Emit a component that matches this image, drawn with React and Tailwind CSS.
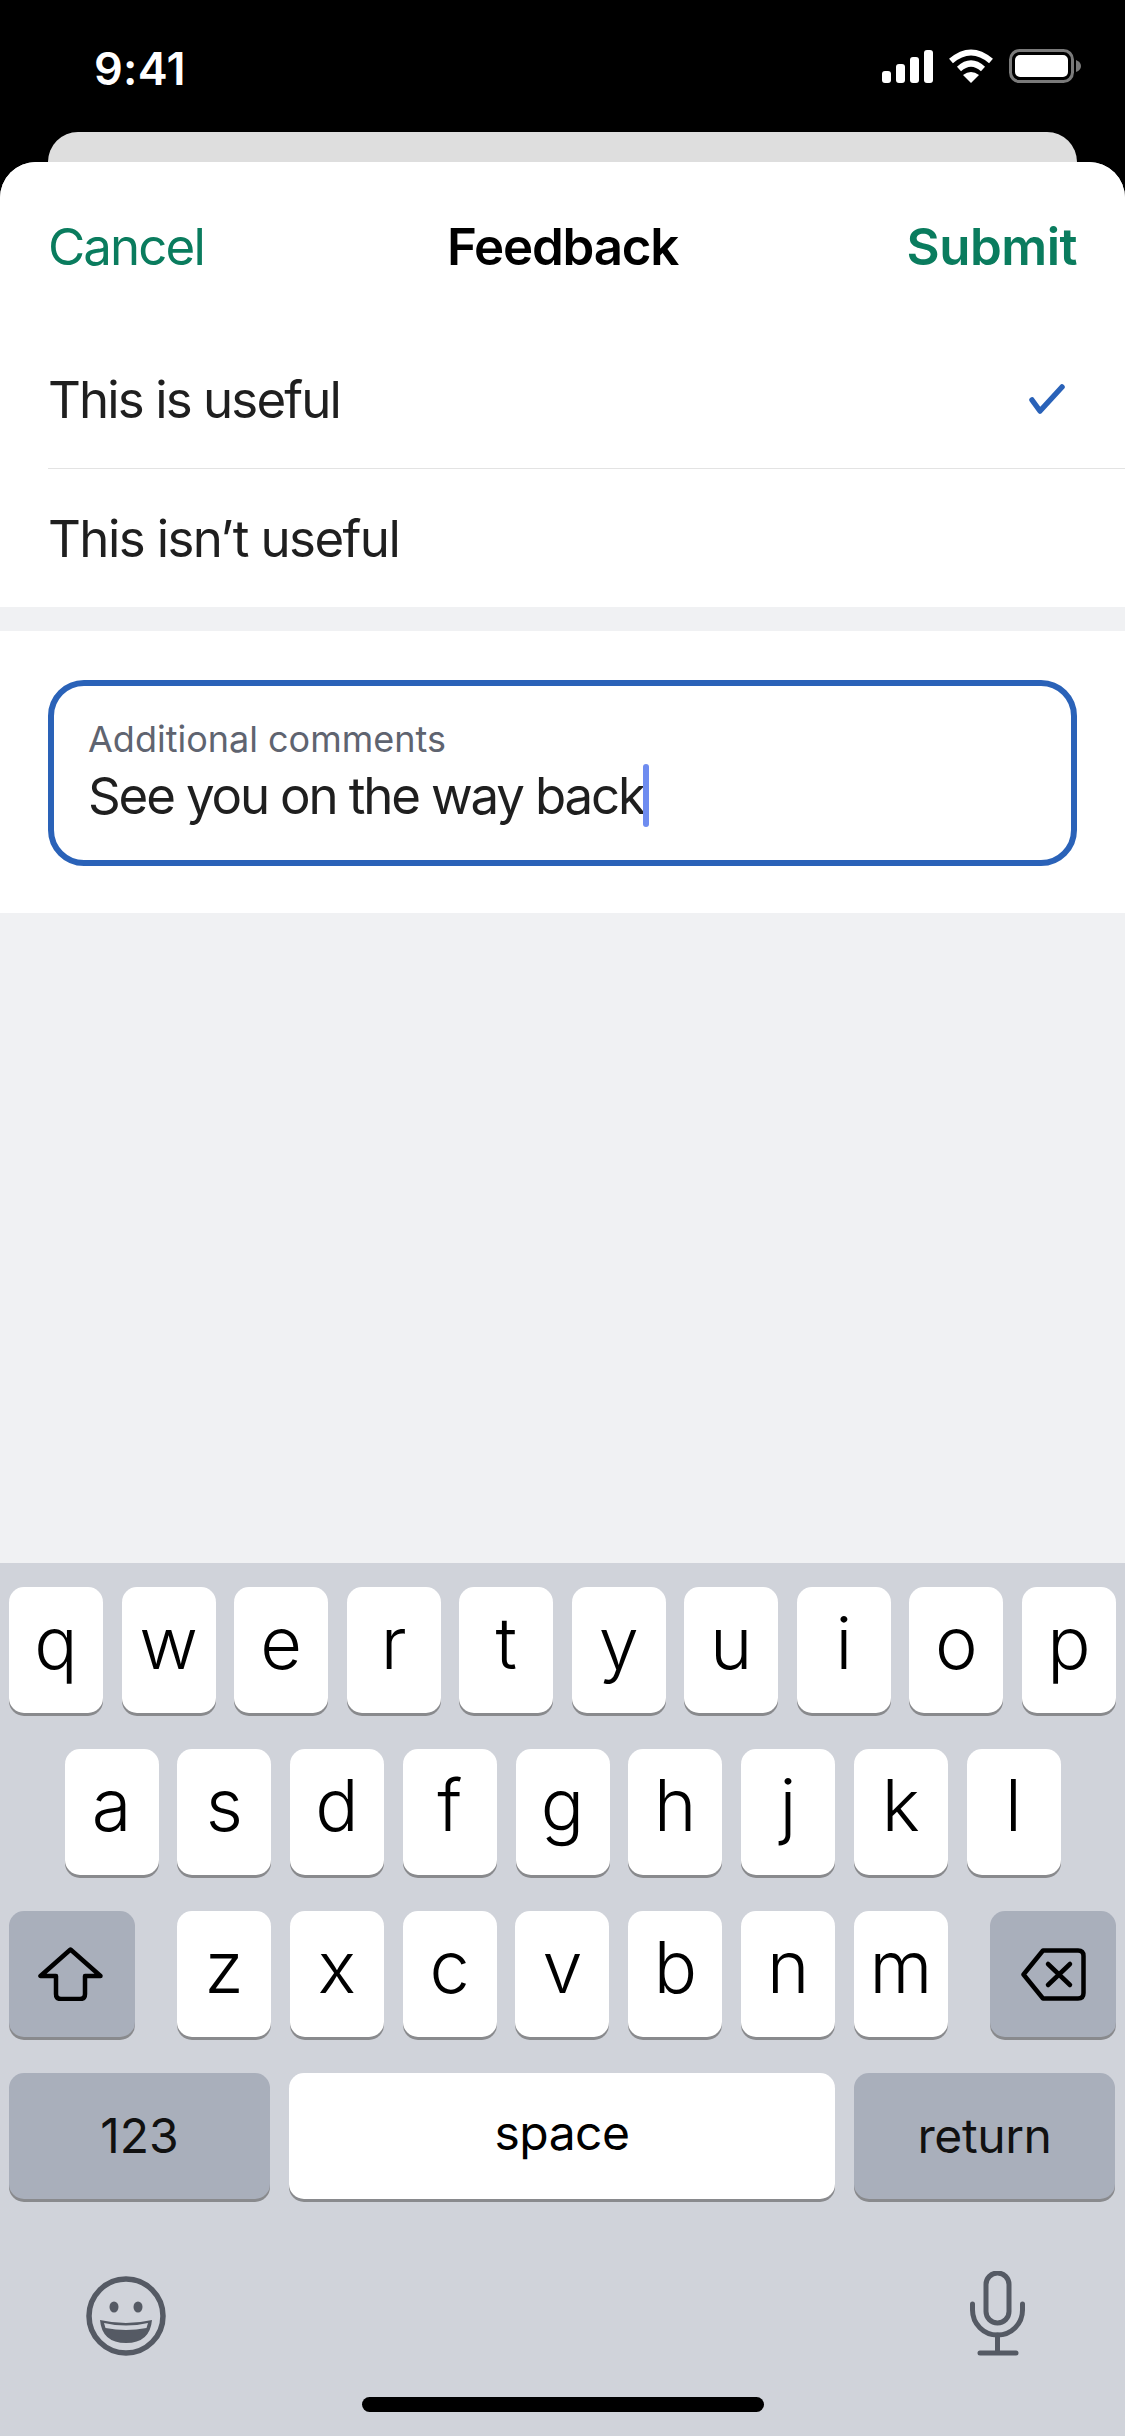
const ROW_1 = ['q', 'w', 'e', 'r', 't', 'y', 'u', 'i', 'o', 'p']
const ROW_2 = ['a', 's', 'd', 'f', 'g', 'h', 'j', 'k', 'l']
const ROW_3 = ['z', 'x', 'c', 'v', 'b', 'n', 'm']

function StatusIcons() {
  return (
    <div className="flex items-center mr-[43px]">
      <svg width="51" height="33" viewBox="0 0 51 33" className="mr-[15px]">
        <rect x="0" y="21" width="9" height="12" rx="3" fill="#fff" />
        <rect x="14" y="14" width="9" height="19" rx="3" fill="#fff" />
        <rect x="28" y="7" width="9" height="26" rx="3" fill="#fff" />
        <rect x="42" y="0" width="9" height="33" rx="3" fill="#fff" />
      </svg>
      <svg width="46" height="34" viewBox="0 0 46 34" className="mr-[15px]">
        <path d="M3 12 Q23 -5 43 12" fill="none" stroke="#fff" strokeWidth="6" />
        <path d="M11 20 Q23 9 35 20" fill="none" stroke="#fff" strokeWidth="6" />
        <path d="M15 26 Q23 20 31 26 L23 34 Z" fill="#fff" />
      </svg>
      <svg width="73" height="34" viewBox="0 0 73 34">
        <rect x="1.5" y="1.5" width="62" height="31" rx="9" fill="none" stroke="#7a7a7a" strokeWidth="3" />
        <rect x="6" y="6" width="53" height="22" rx="5" fill="#fff" />
        <path d="M67 11 Q72 13 72 17 Q72 21 67 23 Z" fill="#7a7a7a" />
      </svg>
    </div>
  )
}

function Check() {
  return (
    <svg width="36" height="30" viewBox="0 0 36 30">
      <path d="M3 16 L11 27 L33 3" fill="none" stroke="#2a62b8" strokeWidth="5.5" strokeLinecap="round" strokeLinejoin="round" />
    </svg>
  )
}

function ShiftIcon() {
  return (
    <svg width="65" height="54" viewBox="0 0 65 54" className="mr-[3px]">
      <path
        d="M32.5 2.5 L2.5 29 H18 V47 Q18 52 23 52 H42 Q47 52 47 47 V29 H62.5 Z"
        fill="none"
        stroke="#000"
        strokeWidth="4.5"
        strokeLinejoin="round"
      />
    </svg>
  )
}

function DeleteIcon() {
  return (
    <svg width="65" height="53" viewBox="0 0 65 53">
      <path
        d="M22 2.5 H57 Q62.5 2.5 62.5 8 V45 Q62.5 50.5 57 50.5 H22 L2.5 26.5 Z"
        fill="none"
        stroke="#000"
        strokeWidth="4.5"
        strokeLinejoin="round"
      />
      <path d="M27 16 L49 37 M49 16 L27 37" fill="none" stroke="#000" strokeWidth="4.5" strokeLinecap="round" />
    </svg>
  )
}

function EmojiIcon() {
  return (
    <svg width="80" height="80" viewBox="0 0 80 80">
      <ellipse cx="40" cy="40" rx="37" ry="37" fill="none" stroke="#555a64" strokeWidth="5.5" />
      <ellipse cx="28" cy="31" rx="4.5" ry="5.5" fill="#555a64" />
      <ellipse cx="52" cy="31" rx="4.5" ry="5.5" fill="#555a64" />
      <path d="M14 44 Q40 50 66 44 Q64 67 40 67 Q16 67 14 44 Z" fill="#555a64" />
      <path d="M18 47 Q40 52 62 47 L60.5 52 Q40 56 19.5 52 Z" fill="#d0d3da" />
    </svg>
  )
}

function MicIcon() {
  return (
    <svg width="55" height="85" viewBox="0 0 55 85">
      <rect x="16" y="2" width="23" height="50" rx="11.5" fill="none" stroke="#555a64" strokeWidth="5" />
      <path d="M2.5 33 V39 A25 25 0 0 0 52.5 39 V33" fill="none" stroke="#555a64" strokeWidth="5" strokeLinecap="round" />
      <path d="M27.5 64 V81 M10 82 H46" fill="none" stroke="#555a64" strokeWidth="5" strokeLinecap="round" />
    </svg>
  )
}

function Key({ label }) {
  return (
    <div className="w-[94px] h-[126px] rounded-[15px] bg-white shadow-[0_3px_0_#898a8d] flex items-center justify-center text-[72px] leading-none font-light text-black pb-[14px]">
      {label}
    </div>
  )
}

function WideKey({ label, tracking }) {
  return (
    <div className={`w-[261px] h-[126px] rounded-[15px] bg-[#a9afbb] shadow-[0_3px_0_#898a8d] flex items-center justify-center text-[48px] leading-none text-[#111] ${tracking}`}>
      {label}
    </div>
  )
}

export default function App() {
  return (
    <div className="w-[1125px] h-[2436px] overflow-hidden bg-black flex flex-col font-['Inter','Noto_Sans',sans-serif]">

      {/* Status bar */}
      <div className="h-[132px] shrink-0 flex items-center justify-between">
        <span className="ml-[94px] mt-[5px] text-[45px] font-semibold text-white leading-none tracking-[0.3px]">9:41</span>
        <StatusIcons />
      </div>

      {/* Card behind the sheet */}
      <div className="h-[30px] shrink-0 mx-[48px] rounded-t-[30px] bg-[#dedede]" />

      {/* Sheet */}
      <div className="flex-1 flex flex-col rounded-t-[36px] bg-[#f0f1f3] overflow-hidden">
        <div className="bg-white">
          <header className="h-[168px] px-[48px] grid grid-cols-3 items-center text-[51px] leading-none">
            <span className="text-[#0a7c5e] tracking-[-1.9px]">Cancel</span>
            <span className="text-center font-semibold text-black tracking-[-1.2px]">Feedback</span>
            <span className="text-right font-semibold text-[#0a7c5e] tracking-[-0.5px]">Submit</span>
          </header>
          <div className="pl-[48px] text-[51px] leading-none text-[#1f1f1f] tracking-[-1.9px]">
            <div className="h-[139px] border-b border-[#e3e3e3] flex items-center justify-between pr-[60px]">
              <span>This is useful</span>
              <Check />
            </div>
            <div className="h-[138px] flex items-center">
              <span className="tracking-[-1.6px]">This isn’t useful</span>
            </div>
          </div>
        </div>

        <div className="mt-[24px] bg-white h-[282px] px-[48px] pt-[49px]">
          <div className="h-[186px] rounded-[36px] border-[6px] border-[#2a62b8] pl-[34px] pt-[31px]">
            <div className="text-[36px] leading-[44px] text-[#5f6470]">Additional comments</div>
            <div className="flex items-center h-[64px] mt-[2px]">
              <span className="text-[51px] leading-none text-[#1f1f1f] tracking-[-2.15px]">See you on the way back</span>
              <span className="w-[6px] h-[63px] rounded-full bg-[#6e8cf0] -ml-[1px]" />
            </div>
          </div>
        </div>

        <div className="flex-1" />

        {/* Keyboard */}
        <div className="h-[873px] shrink-0 bg-[#d0d3da] pt-[24px] flex flex-col">
          <div className="flex justify-between px-[9px]">
            {ROW_1.map(k => <Key key={k} label={k} />)}
          </div>
          <div className="flex justify-between px-[64.5px] mt-[36px]">
            {ROW_2.map(k => <Key key={k} label={k} />)}
          </div>
          <div className="flex justify-between px-[9px] mt-[36px]">
            <div className="w-[126px] h-[126px] rounded-[15px] bg-[#a9afbb] shadow-[0_3px_0_#898a8d] flex items-center justify-center">
              <ShiftIcon />
            </div>
            <div className="w-[771px] flex justify-between">
              {ROW_3.map(k => <Key key={k} label={k} />)}
            </div>
            <div className="w-[126px] h-[126px] rounded-[15px] bg-[#a9afbb] shadow-[0_3px_0_#898a8d] flex items-center justify-center">
              <DeleteIcon />
            </div>
          </div>
          <div className="flex gap-[19px] pl-[9px] pr-[10px] mt-[36px]">
            <WideKey label="123" tracking="tracking-normal" />
            <div className="flex-1 h-[126px] rounded-[15px] bg-white shadow-[0_3px_0_#898a8d] flex items-center justify-center text-[48px] leading-none text-black pb-[6px] tracking-[-0.5px]">
              space
            </div>
            <WideKey label="return" tracking="tracking-[-0.4px]" />
          </div>
          <div className="flex justify-between items-end pl-[86px] pr-[100px] mt-[72px]">
            <EmojiIcon />
            <MicIcon />
          </div>
          <div className="w-[402px] h-[15px] rounded-full bg-black mx-auto mt-[41px]" />
        </div>
      </div>
    </div>
  )
}
